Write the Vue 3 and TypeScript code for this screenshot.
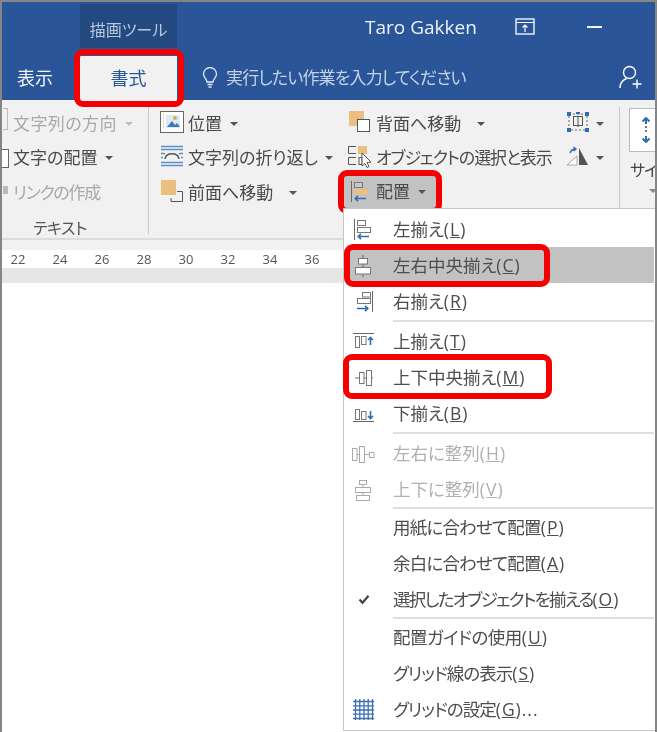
<script setup lang="ts">
interface MenuRow {
  label?: string
  key?: string
  tail?: string
  icon?: string
  disabled?: boolean
  active?: boolean
  mark?: string
  separator?: boolean
  tight?: boolean
  spacing?: number
}

const rulerTicks: number[] = [22, 24, 26, 28, 30, 32, 34, 36]

const icons: Record<string, string> = {
  left: '<path d="M3.500 1v21" stroke="#666"/><rect x="6.500" y="2.500" width="8" height="5" fill="#fff" stroke="#777"/><rect x="6.500" y="9.500" width="13" height="5" fill="#fff" stroke="#777"/><path d="M18 18.500H7M10 15.800l-2.800 2.700 2.800 2.700" fill="none" stroke="#2f6db0" stroke-width="1.600"/>',
  center: '<path d="M12 1v22" stroke="#666"/><rect x="7.500" y="4.500" width="9" height="5.500" fill="#fff" stroke="#777"/><rect x="4.500" y="13.500" width="15" height="6.500" fill="#fff" stroke="#777"/>',
  right: '<path d="M21.500 1v21" stroke="#666"/><rect x="11.500" y="2.500" width="8" height="4.500" fill="#fff" stroke="#777"/><rect x="6.500" y="8.500" width="13" height="5" fill="#fff" stroke="#777"/><path d="M6 18.500h11M14 15.800l2.800 2.700-2.800 2.700" fill="none" stroke="#2f6db0" stroke-width="1.600"/>',
  top: '<path d="M2 3.500h21" stroke="#666"/><rect x="4.500" y="6.500" width="4" height="11" fill="#fff" stroke="#777"/><rect x="10.500" y="6.500" width="4.500" height="8" fill="#fff" stroke="#777"/><path d="M19.500 15V7.500M17 10l2.500-2.500L22 10" fill="none" stroke="#2f6db0" stroke-width="1.600"/>',
  middle: '<path d="M4 12h18" stroke="#666"/><rect x="8.500" y="6.500" width="4.500" height="11" fill="#fff" stroke="#777"/><rect x="15.500" y="4.500" width="5" height="15" fill="#fff" stroke="#777"/>',
  bottom: '<path d="M2 19.500h21" stroke="#666"/><rect x="4.500" y="7.500" width="4" height="10" fill="#fff" stroke="#777"/><rect x="10.500" y="9.500" width="4.500" height="8" fill="#fff" stroke="#777"/><path d="M19.500 9v7.500M17 14l2.500 2.500L22 14" fill="none" stroke="#2f6db0" stroke-width="1.600"/>',
  distH: '<g stroke="#aaa" fill="#fff"><rect x="1.500" y="6.500" width="4.500" height="12"/><rect x="8.500" y="4.500" width="5" height="16"/><rect x="18.500" y="10.500" width="4.500" height="5"/></g><path d="M6 12.500h2.500M13.500 12.500h5" stroke="#aaa"/>',
  distV: '<g stroke="#aaa" fill="#fff"><rect x="8.500" y="2.500" width="7" height="4"/><rect x="4.500" y="9.500" width="15" height="5"/><rect x="5.500" y="17.500" width="13" height="5"/></g><path d="M12 6.500v3M12 14.500v3" stroke="#aaa"/>',
  check: '<path d="M8.500 11.500l3 3.300 6-7" fill="none" stroke="#444" stroke-width="2.200"/>',
  grid: '<path d="M2 4.500h21M2 8.800h21M2 13h21M2 17.200h21M2 21.500h21M4.500 2v21M8.800 2v21M13 2v21M17.200 2v21M21.500 2v21" stroke="#3d6fb0" stroke-width="1.300" fill="none" transform="translate(0 -1)"/>',
}

const menu: MenuRow[] = [
  { label: '左揃え', key: 'L', icon: 'left' },
  { label: '左右中央揃え', key: 'C', icon: 'center', active: true, mark: 'mark' },
  { label: '右揃え', key: 'R', icon: 'right' },
  { separator: true },
  { label: '上揃え', key: 'T', icon: 'top' },
  { label: '上下中央揃え', key: 'M', icon: 'middle', mark: 'mark mark-wide' },
  { label: '下揃え', key: 'B', icon: 'bottom' },
  { separator: true },
  { label: '左右に整列', key: 'H', icon: 'distH', disabled: true },
  { label: '上下に整列', key: 'V', icon: 'distV', disabled: true },
  { separator: true, tight: true },
  { label: '用紙に合わせて配置', key: 'P', spacing: -0.8 },
  { label: '余白に合わせて配置', key: 'A', spacing: -0.8 },
  { label: '選択したオブジェクトを揃える', key: 'O', icon: 'check', spacing: -1.7 },
  { separator: true, tight: true },
  { label: '配置ガイドの使用', key: 'U', spacing: -0.5 },
  { label: 'グリッド線の表示', key: 'S', spacing: -1 },
  { label: 'グリッドの設定', key: 'G', tail: '...', icon: 'grid', spacing: -1 },
]
</script>

<template>
  <div class="screen">
    <div class="window">
      <header class="titlebar">
        <div class="context-tab">描画ツール</div>
        <div class="user">Taro Gakken</div>
        <svg class="win-icon" width="20" height="18" viewBox="0 0 20 18">
          <rect x="1" y="1" width="18" height="15" fill="none" stroke="#fff" stroke-width="1.300" />
          <path d="M1 4.500h18M10 14V7M7.500 9.500L10 7l2.500 2.500" fill="none" stroke="#fff" stroke-width="1.200" />
        </svg>
        <div class="minimize"></div>
      </header>

      <nav class="tabs">
        <div class="tab">表示</div>
        <div class="tab tab-active"><span>書式</span></div>
        <svg class="bulb" width="16" height="22" viewBox="0 0 16 22">
          <path d="M5 15c0-3-3.500-4-3.500-8a6.500 6.500 0 0 1 13 0c0 4-3.500 5-3.500 8z" fill="none" stroke="#e6ecf5" stroke-width="1.300" />
          <path d="M5.500 17.500h5M6.500 20h3" stroke="#e6ecf5" stroke-width="1.300" />
        </svg>
        <div class="tell-me">実行したい作業を入力してください</div>
        <svg class="person" width="24" height="26" viewBox="0 0 24 26">
          <circle cx="10.500" cy="7.500" r="6" fill="none" stroke="#fff" stroke-width="1.400" />
          <path d="M1 23c0-5 3-8 6.500-9.500M13.500 19h9M18 14.500v9" fill="none" stroke="#fff" stroke-width="1.400" />
        </svg>
      </nav>

      <section class="ribbon">
        <div class="group group-text">
          <div class="tool disabled">
            <span class="stub stub-faint"></span>
            <span class="tool-label wide">文字列の方向</span><i class="caret faint"></i>
          </div>
          <div class="tool">
            <span class="stub"></span>
            <span class="tool-label">文字の配置</span><i class="caret"></i>
          </div>
          <div class="tool disabled row-low">
            <span class="stub stub-faint stub-small"></span>
            <span class="tool-label kana">リンクの作成</span>
          </div>
          <div class="group-name">テキスト</div>
        </div>

        <div class="group group-place">
          <div class="tool">
            <svg class="tool-icon" width="24" height="24" viewBox="0 0 24 24">
              <rect x="0.500" y="1.500" width="23" height="21" fill="#fff" stroke="#666" />
              <rect x="6" y="5" width="14" height="13" fill="#dce9f6" />
              <path d="M7 17l5-6 3 4 2-2 3 4z" fill="#3d78b8" />
              <circle cx="15" cy="8" r="2" fill="#e9a84c" />
              <path d="M3 5h1M3 8h1M3 11h1M3 14h1M3 17h1" stroke="#999" />
            </svg>
            <span class="tool-label">位置</span><i class="caret caret-place"></i>
          </div>
          <div class="tool">
            <svg class="tool-icon" width="24" height="24" viewBox="0 0 24 24">
              <path d="M1 2.500h22M1 5.500h22M1 18.500h22M1 21.500h22M1 9.500h4M19 9.500h4M1 13.500h2M21 13.500h2" stroke="#5b8ec7" stroke-width="1.500" />
              <path d="M5 15c1-7 13-7 14 0" fill="none" stroke="#555" stroke-width="1.500" />
            </svg>
            <span class="tool-label">文字列の折り返し</span><i class="caret caret-wrap"></i>
          </div>
          <div class="tool row-low">
            <svg class="tool-icon" width="24" height="24" viewBox="0 0 24 24">
              <path d="M17 12.500h5.500v10H11V19" fill="none" stroke="#555" />
              <rect x="1" y="1" width="15" height="15" fill="#ecbf80" />
            </svg>
            <span class="tool-label">前面へ移動</span><i class="caret caret-far"></i>
          </div>
        </div>

        <div class="group group-arrange">
          <div class="arrange-main">
            <div class="tool">
              <svg class="tool-icon" width="24" height="24" viewBox="0 0 24 24">
                <rect x="1" y="1" width="15" height="15" fill="#ecbf80" />
                <rect x="9.500" y="9.500" width="12" height="12" fill="#fff" stroke="#555" />
              </svg>
              <span class="tool-label">背面へ移動</span><i class="caret caret-far"></i>
            </div>
            <div class="tool">
              <svg class="tool-icon" width="24" height="24" viewBox="0 0 24 24">
                <path d="M8 2.500H.5v7H8M8 13.500H.5v7H8" fill="none" stroke="#555" />
                <rect x="10" y="2" width="9" height="8" fill="#ecbf80" />
                <rect x="11" y="13.500" width="3" height="7" fill="#fff" stroke="#555" />
                <path d="M14 9l9 9-4 .5 2 4-2 1-2-4-3 2.500z" fill="#fff" stroke="#555" />
              </svg>
              <span class="tool-label kana-tight">オブジェクトの選択と表示</span>
            </div>
            <div class="tool tool-pressed">
              <svg class="tool-icon" width="24" height="24" viewBox="0 0 24 24">
                <path d="M3.500 1v21" stroke="#666" />
                <rect x="6.500" y="2.500" width="8" height="5" fill="#c9c9c9" stroke="#777" />
                <rect x="6" y="9" width="15" height="5.500" fill="#ecbf80" />
                <path d="M18 18.500H7M10 15.800l-2.800 2.700 2.800 2.700" fill="none" stroke="#2f6db0" stroke-width="1.600" />
              </svg>
              <span class="tool-label">配置</span><i class="caret caret-place"></i>
            </div>
          </div>
          <div class="arrange-side">
            <div class="tool">
              <svg class="tool-icon" width="24" height="24" viewBox="0 0 24 24">
                <path d="M3 4h18v16H3z" fill="none" stroke="#666" stroke-dasharray="2 2" />
                <rect x="7.500" y="6.500" width="9" height="9" fill="none" stroke="#555" />
                <path d="M12 6v11" stroke="#555" />
                <g fill="#2f6db0"><rect x="1" y="2" width="4" height="4" /><rect x="19" y="2" width="4" height="4" /><rect x="1" y="18" width="4" height="4" /><rect x="19" y="18" width="4" height="4" /><rect x="10" y="2" width="4" height="2" /></g>
              </svg>
              <i class="caret"></i>
            </div>
            <div class="tool">
              <svg class="tool-icon" width="24" height="24" viewBox="0 0 24 24">
                <path d="M1 21l10-9v9z" fill="#fff" stroke="#aaa" />
                <path d="M13 4l9 17h-9z" fill="#555" />
                <path d="M4 9c1-3 3-4 6-4M7.500 3l2.500 2-2.500 2" fill="none" stroke="#2f6db0" stroke-width="1.400" />
              </svg>
              <i class="caret"></i>
            </div>
          </div>
        </div>

        <div class="group group-size">
          <div class="size-box">
            <svg width="12" height="26" viewBox="0 0 12 26">
              <path d="M6 1v6M2.500 4.500L6 1l3.500 3.500M6 19v6M2.500 21.500L6 25l3.500-3.500" fill="none" stroke="#2f6db0" stroke-width="2" />
              <path d="M6 9v8" stroke="#777" stroke-width="2" stroke-dasharray="2 2" />
            </svg>
          </div>
          <div class="size-name">サイ</div>
          <i class="caret size-caret"></i>
        </div>
      </section>

      <div class="ruler-gap"></div>
      <div class="ruler">
        <span v-for="tick in rulerTicks" :key="tick" class="tick">{{ tick }}</span>
      </div>
      <div class="ruler-band"></div>
      <main class="page"></main>

      <div class="menu">
        <template v-for="(row, index) in menu" :key="index">
          <div v-if="row.separator" class="separator" :class="{ 'separator-tight': row.tight }"></div>
          <div
            v-else
            class="menu-row"
            :class="{ 'is-disabled': row.disabled, 'is-active': row.active }"
          >
            <span class="menu-icon">
              <svg v-if="row.icon" width="24" height="24" viewBox="0 0 24 24" v-html="icons[row.icon]"></svg>
            </span>
            <span class="menu-text">
              <span class="menu-label" :style="{ letterSpacing: (row.spacing ?? 0) + 'px' }">{{ row.label }}</span>
              <span class="menu-key">(<u>{{ row.key }}</u>){{ row.tail }}</span>
            </span>
            <span v-if="row.mark" :class="row.mark"></span>
          </div>
        </template>
      </div>
    </div>
  </div>
</template>

<style scoped>
.screen {
  width: 657px;
  height: 732px;
  box-sizing: border-box;
  padding: 2px 2px 0;
  background: #858585;
  font-family: "Open Sans", "Noto Sans CJK JP", sans-serif;
  font-feature-settings: "palt";
  color: #444;
  overflow: hidden;
}
.window {
  position: relative;
  height: 730px;
  display: flex;
  flex-direction: column;
  background: #fff;
  overflow: hidden;
  filter: blur(0.35px);
}
.titlebar {
  height: 46px;
  flex: none;
  display: flex;
  align-items: flex-start;
  background: #2a5699;
  color: #fff;
}
.context-tab {
  width: 97px;
  height: 44px;
  margin: 2px 0 0 78px;
  background: #234a80;
  color: #bcc8dd;
  font-size: 16px;
  line-height: 52px;
  text-align: center;
}
.user {
  margin: 11px 0 0 188px;
  font-size: 19px;
  line-height: 28px;
  color: #eef2f8;
}
.win-icon {
  margin: 16px 0 0 38px;
}
.minimize {
  width: 15px;
  height: 2px;
  margin: 24px 0 0 52px;
  background: #f2f5fa;
}
.tabs {
  height: 52px;
  flex: none;
  display: flex;
  align-items: flex-end;
  background: #2a5699;
  border-bottom: 2px solid #3f70ae;
  box-sizing: content-box;
  margin-bottom: -2px;
  position: relative;
}
.tab {
  width: 66px;
  height: 44px;
  line-height: 44px;
  text-align: center;
  font-size: 18px;
  color: #f1f4f9;
}
.tab-active {
  position: relative;
  width: 97px;
  margin-left: 12px;
  background: #f1f1f1;
  color: #2b579a;
  z-index: 2;
}
.tab-active::after {
  content: "";
  position: absolute;
  inset: -7px -7px -7px -6px;
  border: 6px solid #f50000;
  border-radius: 9px;
}
.bulb {
  margin: 0 0 11px 25px;
}
.tell-me {
  margin: 0 0 0 8px;
  height: 44px;
  line-height: 44px;
  font-size: 17px;
  letter-spacing: -0.85px;
  color: #c6d2e6;
  width: 380px;
}
.person {
  margin: 0 0 9px 0;
  position: absolute;
  left: 617px;
  bottom: 0;
}
.ribbon {
  height: 140px;
  flex: none;
  display: flex;
  background: #f1f1f1;
  border-bottom: 2px solid #dcdcdc;
  padding-top: 7px;
  box-sizing: border-box;
  font-size: 17px;
  position: relative;
}
.group {
  position: relative;
  height: 127px;
  flex: none;
  border-right: 1px solid #c8c8c8;
  box-sizing: border-box;
}
.group-text {
  width: 147px;
  padding-left: 11px;
}
.group-place {
  width: 190px;
  padding-left: 11px;
  border-right: none;
}
.group-arrange {
  width: 281px;
  padding-left: 9px;
  display: flex;
  height: 101px;
}
.arrange-main {
  width: 218px;
}
.arrange-side .tool-icon {
  margin-right: 0;
}
.arrange-side .caret {
  margin-left: 6px;
}
.group-size {
  flex: 1;
  min-width: 0;
  border-right: none;
}
.tool {
  position: relative;
  height: 34px;
  display: flex;
  align-items: center;
  white-space: nowrap;
  color: #4a4a4a;
}
.row-low {
  margin-top: 1px;
}
.tool-icon {
  flex: none;
  margin-right: 4px;
  margin-bottom: 5px;
}
.tool-label {
  line-height: 34px;
}
.wide {
  letter-spacing: 0.4px;
}
.disabled {
  color: #a8a8a8;
}
.kana {
  letter-spacing: -1.300px;
}
.kana-tight {
  letter-spacing: -1.100px;
}
.stub {
  position: absolute;
  left: -11px;
  width: 7px;
  height: 19px;
  border: 1px solid #666;
  border-left: none;
  background: #fff;
  box-sizing: border-box;
}
.stub-faint {
  left: -10px;
  width: 5px;
  border-color: #bbb;
  background: none;
  top: 1px;
  height: 22px;
}
.stub-small {
  top: 10px;
  height: 8px;
  background: #bbb;
}
.caret {
  flex: none;
  width: 0;
  height: 0;
  margin-left: 8px;
  border-left: 4px solid transparent;
  border-right: 4px solid transparent;
  border-top: 4px solid #555;
}
.caret.faint {
  border-top-color: #bdbdbd;
}
.caret-wrap {
  margin-left: 7px;
}
.caret-far {
  margin-left: 16px;
}
.group-name {
  position: absolute;
  left: 0;
  right: 0;
  top: 109px;
  text-align: center;
  font-size: 16px;
  line-height: 24px;
  letter-spacing: -0.5px;
  padding-right: 30px;
  color: #555;
}
.tool-pressed {
  width: 92px;
  margin: 1px 0 0 -4px;
  padding-left: 4px;
  box-sizing: border-box;
  background: #c2c2c2;
  height: 32px;
}
.tool-pressed .tool-icon {
  margin-bottom: 0;
}
.tool-pressed::after {
  content: "";
  position: absolute;
  inset: -6px;
  border: 6px solid #f50000;
  border-radius: 9px;
}
.size-box {
  width: 50px;
  height: 44px;
  margin: 1px 0 0 9px;
  box-sizing: border-box;
  border: 1px solid #bbb;
  background: #fff;
  padding: 8px 0 0 10px;
}
.size-name {
  margin: 5px 0 0 10px;
  line-height: 26px;
  white-space: nowrap;
  font-size: 16px;
  letter-spacing: -1px;
}
.size-caret {
  display: block;
  margin: 6px 0 0 29px;
  border-top-color: #888;
}
.ruler-gap {
  height: 10px;
  flex: none;
  background: #f1f1f1;
}
.ruler {
  height: 18px;
  flex: none;
  display: flex;
  background: #fff;
}
.tick {
  width: 42px;
  flex: none;
  text-align: center;
  font-size: 13px;
  line-height: 18px;
  color: #555;
}
.tick:first-child {
  margin-left: -5px;
}
.ruler-band {
  height: 15px;
  flex: none;
  background: #e6e6e6;
}
.page {
  flex: 1;
  background: #fff;
}
.menu {
  position: absolute;
  z-index: 3;
  left: 341px;
  top: 206px;
  width: 330px;
  height: 523px;
  box-sizing: border-box;
  padding: 2px 0 0 5px;
  background: #fff;
  border: 1px solid #c6c6c6;
  font-size: 17.500px;
}
.menu-row {
  position: relative;
  height: 36px;
  width: 305px;
  display: flex;
  align-items: center;
  color: #4d4d4d;
}
.menu-row.is-active {
  background: #c2c2c2;
}
.menu-row.is-disabled {
  color: #b0b0b0;
}
.menu-icon {
  width: 44px;
  height: 24px;
  flex: none;
  padding-left: 2px;
  box-sizing: border-box;
  margin-top: 1px;
}
.menu-text {
  white-space: nowrap;
  padding-bottom: 2px;
}
.menu-key {
  letter-spacing: 1px;
}
.mark {
  position: absolute;
  left: -5px;
  top: -3px;
  width: 206px;
  height: 43px;
  box-sizing: border-box;
  border: 6px solid #f50000;
  border-radius: 9px;
}
.mark-wide {
  left: -6px;
  top: -5px;
  width: 209px;
  height: 45px;
}
.separator {
  height: 2px;
  margin: 1px 0 1px 44px;
  width: 261px;
  background: #dedede;
}
.separator-tight {
  margin-top: 0;
  margin-bottom: 0;
}
</style>
